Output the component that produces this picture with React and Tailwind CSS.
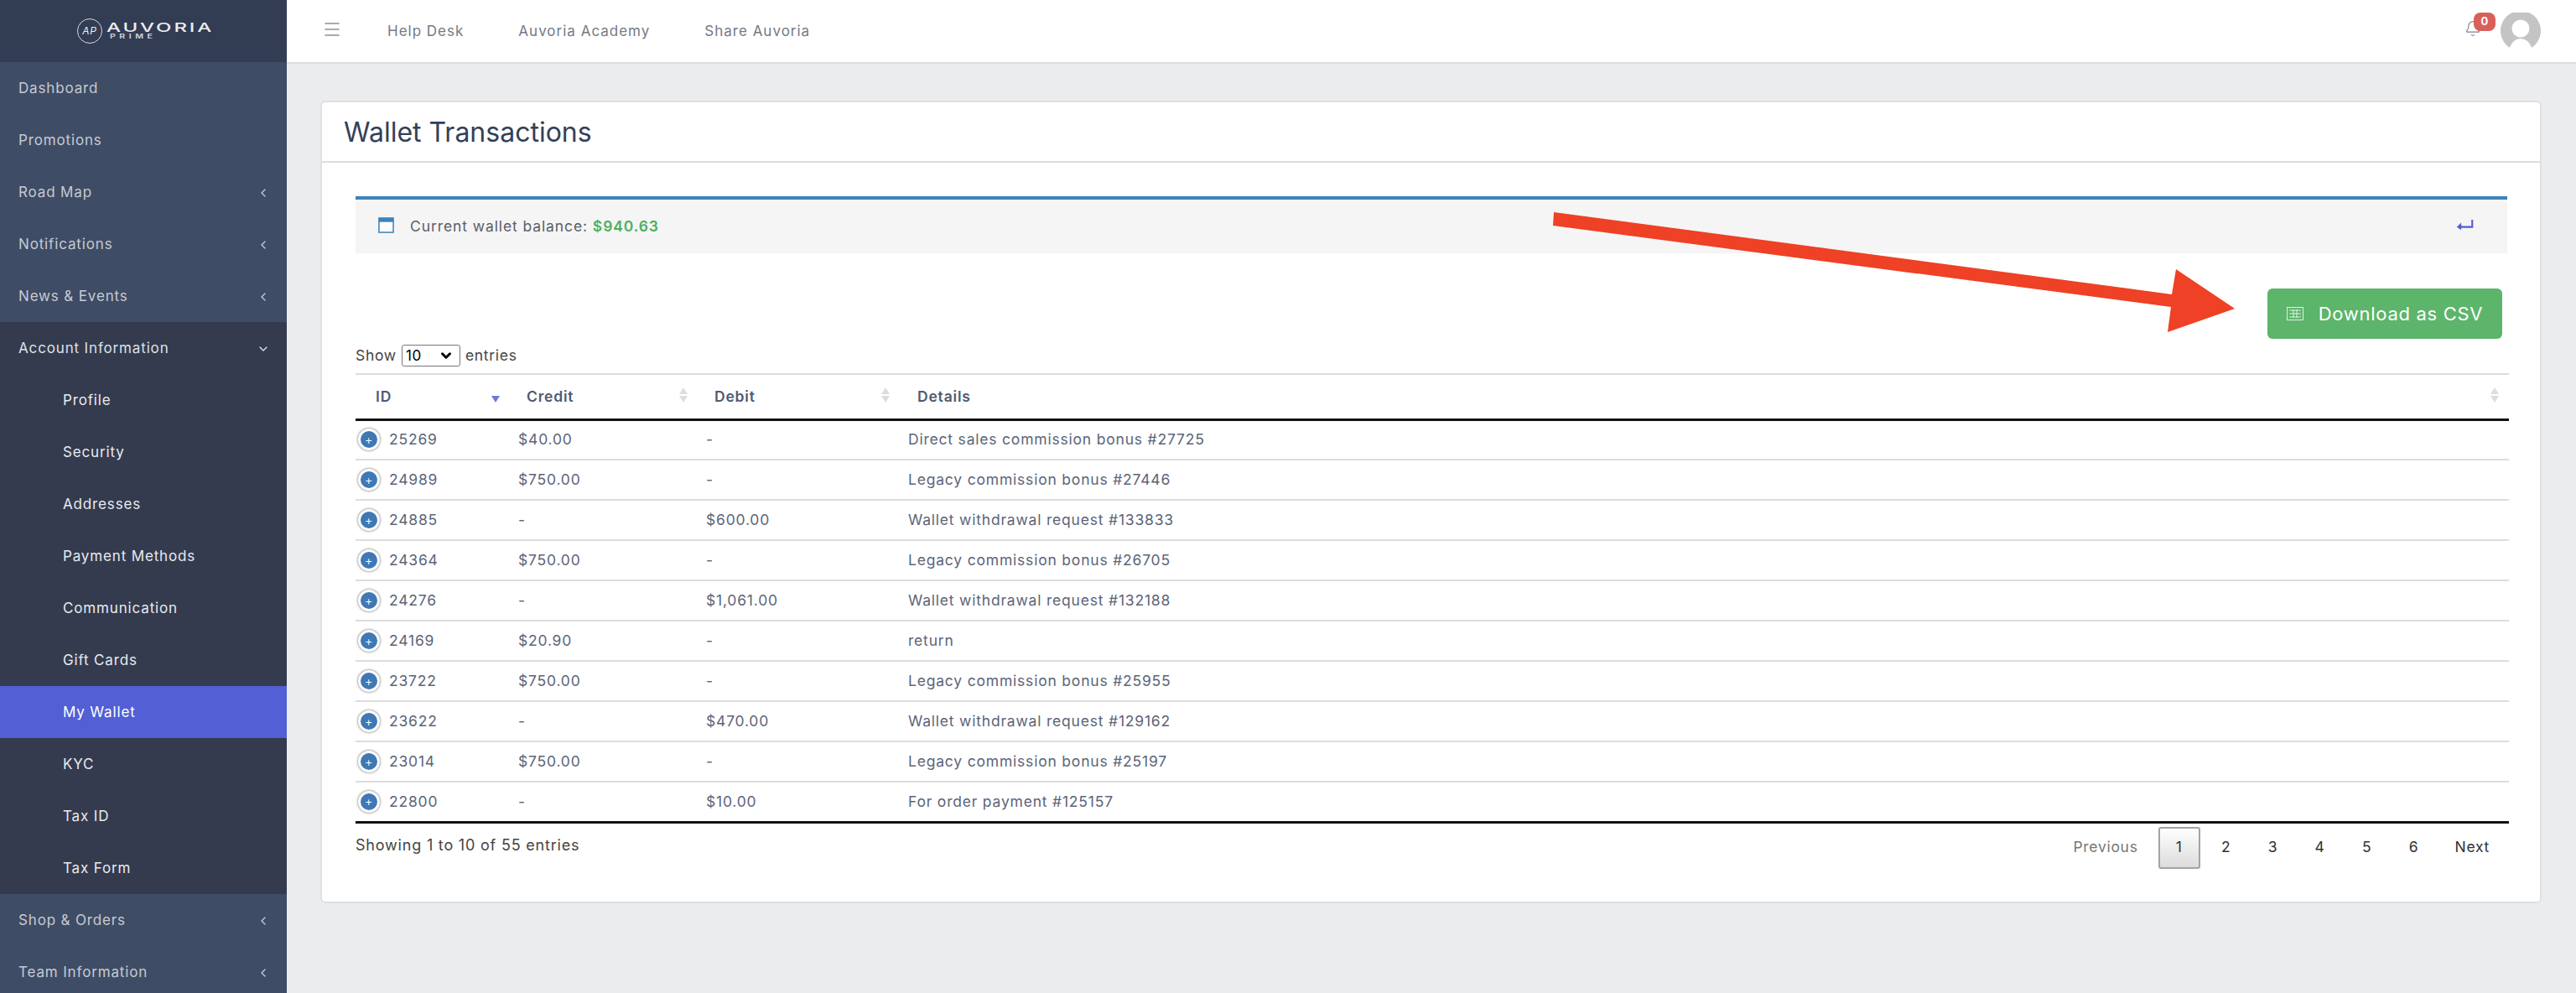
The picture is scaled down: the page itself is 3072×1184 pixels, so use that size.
import { Bell, ChevronDown, ChevronLeft, Menu } from 'lucide-react';

const TOP_MENU = [
  { label: 'Dashboard' },
  { label: 'Promotions' },
  { label: 'Road Map', arrow: true },
  { label: 'Notifications', arrow: true },
  { label: 'News & Events', arrow: true },
];
const SUB_MENU = ['Profile', 'Security', 'Addresses', 'Payment Methods', 'Communication', 'Gift Cards', 'My Wallet', 'KYC', 'Tax ID', 'Tax Form'];
const ROWS = [
  ['25269', '$40.00', '-', 'Direct sales commission bonus #27725'],
  ['24989', '$750.00', '-', 'Legacy commission bonus #27446'],
  ['24885', '-', '$600.00', 'Wallet withdrawal request #133833'],
  ['24364', '$750.00', '-', 'Legacy commission bonus #26705'],
  ['24276', '-', '$1,061.00', 'Wallet withdrawal request #132188'],
  ['24169', '$20.90', '-', 'return'],
  ['23722', '$750.00', '-', 'Legacy commission bonus #25955'],
  ['23622', '-', '$470.00', 'Wallet withdrawal request #129162'],
  ['23014', '$750.00', '-', 'Legacy commission bonus #25197'],
  ['22800', '-', '$10.00', 'For order payment #125157'],
];

function Logo() {
  return (
    <div className="h-[74px] bg-[#323c52] flex items-center pl-[92px] gap-[5px] text-[#eceef1]">
      <div className="w-[30px] h-[30px] rounded-full border border-[#d5d8de] flex items-center justify-center text-[12px] italic">AP</div>
      <div className="flex flex-col items-start leading-none">
        <span className="text-[15px] tracking-[1.8px] font-medium leading-[14px] origin-left scale-x-[1.6]">AUVORIA</span>
        <span className="text-[7px] tracking-[3px] ml-[4px] font-bold leading-[8px] text-[#c8ccd4] origin-left scale-x-[1.5]">PRIME</span>
      </div>
    </div>
  );
}

function Sidebar() {
  return (
    <aside className="w-[342px] shrink-0 bg-[#3f4c65] text-[#c6cad3] text-[17px] tracking-[0.85px]">
      <Logo />
      {TOP_MENU.map((m) => <TopItem key={m.label} {...m} />)}
      <div className="h-[62px] pt-[2px] flex items-center justify-between pl-[22px] pr-[20px] bg-[#343b4f] text-[#dfe1e7]">
        Account Information
        <ChevronDown className="w-[16px] h-[16px]" strokeWidth={2} />
      </div>
      <div className="bg-[#343b4f] text-[#e8eaee]">
        {SUB_MENU.map((s) => (
          <div key={s} className={`h-[62px] pt-[2px] flex items-center pl-[75px] ${s === 'My Wallet' ? 'bg-[#525fd5] text-white' : ''}`}>{s}</div>
        ))}
      </div>
      <TopItem label="Shop & Orders" arrow />
      <TopItem label="Team Information" arrow />
    </aside>
  );
}

function TopItem({ label, arrow }) {
  return (
    <div className="h-[62px] pt-[2px] flex items-center justify-between pl-[22px] pr-[20px]">
      {label}
      {arrow && <ChevronLeft className="w-[16px] h-[16px]" strokeWidth={2} />}
    </div>
  );
}

function Topbar() {
  return (
    <header className="h-[76px] shrink-0 bg-white border-b-2 border-[#dcdde1] flex items-center pl-[42px] pr-[42px] text-[17px] text-[#737a86] tracking-[1px]">
      <Menu className="w-[24px] h-[24px] text-[#8a8f98] mt-[-4px]" strokeWidth={1.5} />
      <nav className="flex gap-[65px] ml-[54px] pt-[2px]">
        <span>Help Desk</span>
        <span>Auvoria Academy</span>
        <span>Share Auvoria</span>
      </nav>
      <div className="ml-auto flex items-center relative">
        <Bell className="w-[20px] h-[20px] text-[#7d8390] mr-[23px] mt-[-6px]" strokeWidth={1.4} />
        <span className="absolute left-[11px] top-0 w-[26px] h-[22px] rounded-[8px] bg-[#d9605a] text-white text-[13px] font-bold flex items-center justify-center tracking-normal">0</span>
        <svg viewBox="0 0 48 44" className="w-[48px] h-[44px]">
          <path d="M11 42A24 24 0 1 1 37 42A15 15 0 0 0 24 32A15 15 0 0 0 11 42Z" fill="#c4c4c4" />
          <circle cx="24" cy="19" r="10.5" fill="#fff" />
          <path d="M11 42Q15 31 24 31Q33 31 37 42Z" fill="#fff" />
        </svg>
      </div>
    </header>
  );
}

function SortArrows({ active }) {
  return (
    <span className="absolute right-[12px] top-[15px] flex flex-col gap-[2px]">
      <span className={`w-0 h-0 border-x-[5px] border-x-transparent border-b-[8px] ${active ? 'border-b-transparent' : 'border-b-[#dcdde1]'}`} />
      <span className={`w-0 h-0 border-x-[5px] border-x-transparent border-t-[8px] ${active ? 'border-t-[#6f78d8]' : 'border-t-[#dcdde1]'}`} />
    </span>
  );
}

function TransactionsTable() {
  return (
    <table className="w-[calc(100%+2px)] table-fixed border-collapse text-[17.5px] text-[#5c6579] tracking-[0.8px]">
      <thead>
        <tr className="h-[54px] border-t-2 border-b-[3px] border-t-[#dcdde1] border-b-[#111111] text-[#4e5a72] text-left">
          <th className="w-[184px] pl-[24px] font-semibold relative">ID<SortArrows active /></th>
          <th className="w-[224px] pl-[20px] font-semibold relative">Credit<SortArrows /></th>
          <th className="w-[241px] pl-[20px] font-semibold relative">Debit<SortArrows /></th>
          <th className="pl-[21px] font-semibold relative">Details<SortArrows /></th>
        </tr>
      </thead>
      <tbody>
        {ROWS.map((r, i) => (
          <tr key={r[0]} className={`h-[48px] ${i < ROWS.length - 1 ? 'border-b-2 border-[#dcdde1]' : 'border-b-[3px] border-[#111111]'}`}>
            <td className="pl-[3px]">
              <div className="flex items-center gap-[11px]">
                <span className="w-[26px] h-[26px] rounded-full bg-[#3f78b5] border-[3px] border-white shadow-[0_0_3px_#555] text-white text-[15px] leading-none flex items-center justify-center font-light">+</span>
                {r[0]}
              </div>
            </td>
            <td className="pl-[10px]">{r[1]}</td>
            <td className="pl-[10px]">{r[2]}</td>
            <td className="pl-[10px]">{r[3]}</td>
          </tr>
        ))}
      </tbody>
    </table>
  );
}

function Pagination() {
  return (
    <div className="flex items-center text-[17.5px] text-[#333333] tracking-[0.7px]">
      <span className="text-[#777777] mr-[24px]">Previous</span>
      <span className="w-[50px] h-[50px] border-2 border-[#a3a3a3] rounded-[3px] bg-gradient-to-b from-white to-[#dcdcdc] flex items-center justify-center">1</span>
      {['2', '3', '4', '5', '6'].map((n) => (
        <span key={n} className={`w-[56px] text-center ${n === '2' ? 'ml-[3px]' : ''}`}>{n}</span>
      ))}
      <span className="ml-[21px]">Next</span>
    </div>
  );
}

export default function App() {
  return (
    <div className="relative h-[1184px] overflow-hidden flex bg-[#ebecee] font-['Inter',sans-serif]">
      <Sidebar />
      <div className="flex-1 flex flex-col min-w-0">
        <Topbar />
        <main className="pt-[44px] pl-[40px] pr-[41px]">
          <section className="h-[957px] bg-white border-2 border-[#dfe0e4] rounded-[6px]">
            <h1 className="h-[72px] pt-[2px] flex items-center pl-[26px] border-b-2 border-[#dcdde1] text-[32px] font-normal text-[#344057]">Wallet Transactions</h1>
            <div className="pl-[40px] pr-[39px] pt-[40px]">
              <div className="h-[68px] bg-[#f5f5f5] border-t-4 border-[#3c83bb] flex items-center pl-[27px] pr-[40px] text-[17.5px] text-[#5a5f68] tracking-[0.9px]">
                <svg viewBox="0 0 20 20" className="w-[19px] h-[19px] mr-[19px] mb-[3px]">
                  <rect x="1" y="1" width="18" height="18" fill="#fff" stroke="#3c83bb" strokeWidth="1.6" />
                  <rect x="1" y="1" width="18" height="5" fill="#3c83bb" />
                </svg>
                Current wallet balance:&nbsp;<span className="text-[#4cb05f] font-semibold">$940.63</span>
                <svg viewBox="0 0 24 16" className="w-[21px] h-[16px] ml-auto mb-[4px] text-[#4f5cd6]">
                  <path d="M22 1V11H4" fill="none" stroke="currentColor" strokeWidth="2.4" />
                  <path d="M7 5L1 11L7 15Z" fill="currentColor" />
                </svg>
              </div>
              <div className="flex justify-end pr-[6px] mt-[42px]">
                <button className="w-[280px] h-[60px] rounded-[6px] bg-[#5cb56a] text-white text-[22px] tracking-[0.7px] flex items-center justify-center gap-[18px]">
                  <svg viewBox="0 0 20 16" className="w-[20px] h-[16px]" fill="none" stroke="currentColor" strokeWidth="0.8">
                    <rect x="0.5" y="0.5" width="19" height="15" />
                    <path d="M3 4H17M3 8H17M3 12H17M8 3V13M12 3V13" />
                  </svg>
                  Download as CSV
                </button>
              </div>
              <div className="h-[42px] mt-[-1px] flex items-center gap-[6px] text-[17.5px] text-[#444444] tracking-[0.7px]">
                Show
                <div className="relative">
                  <select className="block appearance-none w-[70px] h-[26px] pl-[4px] border border-[#777777] rounded-[3px] text-[17px] text-black">
                    <option>10</option>
                  </select>
                  <ChevronDown className="absolute right-[8px] top-[4px] w-[18px] h-[18px] text-black pointer-events-none" strokeWidth={4} />
                </div>
                entries
              </div>
              <TransactionsTable />
              <div className="flex justify-between items-center pt-[4px] pr-[21px]">
                <span className="pb-[6px] text-[18px] text-[#444444] tracking-[0.8px]">Showing 1 to 10 of 55 entries</span>
                <Pagination />
              </div>
            </div>
          </section>
        </main>
      </div>
      {/* annotation arrow on top of the page */}
      <svg className="absolute left-0 top-0 pointer-events-none" width="3072" height="1184">
        <polygon points="1853,253 2590,351 2595,321 2665,368 2585,396 2589,366 1852,269" fill="#ee4125" />
      </svg>
    </div>
  );
}
